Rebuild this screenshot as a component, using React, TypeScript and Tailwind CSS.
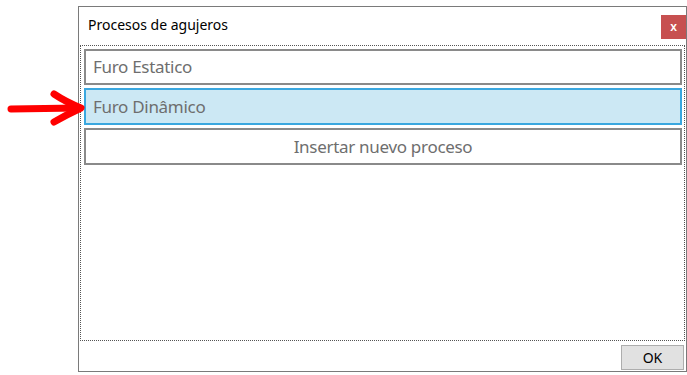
import React from "react"

const items = [
  { label: "Furo Estatico", selected: false },
  { label: "Furo Dinâmico", selected: true },
]

function RedArrow() {
  return (
    <svg
      className="absolute left-0 top-[88px]"
      width="90"
      height="40"
      viewBox="0 0 90 40"
      fill="none"
    >
      <path d="M11 21 L78 20" stroke="#ff0000" strokeWidth="7" strokeLinecap="round" />
      <path
        d="M54 6 Q66 14 81 20 Q66 27 54 34"
        stroke="#ff0000"
        strokeWidth="7"
        strokeLinecap="round"
        strokeLinejoin="round"
      />
    </svg>
  )
}

export default function App() {
  return (
    <div
      className="relative w-[687px] h-[375px] bg-white pl-[78px] pt-[6px]"
      style={{ fontFamily: '"Noto Sans", "Open Sans", sans-serif' }}
    >
      <RedArrow />
      <div className="flex flex-col w-[609px] h-[366px] border border-[#7a7a7a] bg-white">
        {/* Title bar */}
        <div className="flex items-start justify-between h-[38px] shrink-0">
          <span className="pl-[9px] pt-[9px] text-[14px] leading-[18px] text-black">
            Procesos de agujeros
          </span>
          <div className="mt-[8px] flex h-[24px] w-[25px] items-center justify-center bg-[#c75050] pb-px text-[12px] font-semibold leading-none text-white">
            x
          </div>
        </div>

        {/* List panel */}
        <div className="mx-px flex h-[296px] shrink-0 flex-col gap-[3px] border border-dotted border-[#555] pl-[3px] pr-[2px] pt-[3px]">
          {items.map((item) => (
            <div
              key={item.label}
              className={
                item.selected
                  ? "flex h-[37px] items-center border-2 border-[#3aa7df] bg-[#cce8f4] pl-[7px] text-[17px] tracking-[-0.3px] text-[#6e6e6e]"
                  : "flex h-[36px] items-center border-2 border-[#8a8a8a] bg-white pl-[7px] text-[17px] tracking-[-0.3px] text-[#6e6e6e]"
              }
            >
              {item.label}
            </div>
          ))}
          <div className="flex h-[37px] items-center justify-center border-2 border-[#8a8a8a] bg-white text-[17px] tracking-[-0.3px] text-[#6e6e6e]">
            Insertar nuevo proceso
          </div>
        </div>

        {/* Footer */}
        <div className="flex flex-1 items-start justify-end pr-[2px] pt-[4px]">
          <button className="h-[25px] w-[63px] border border-[#adadad] bg-[#e1e1e1] text-[14px] leading-none text-black">
            OK
          </button>
        </div>
      </div>
    </div>
  )
}
